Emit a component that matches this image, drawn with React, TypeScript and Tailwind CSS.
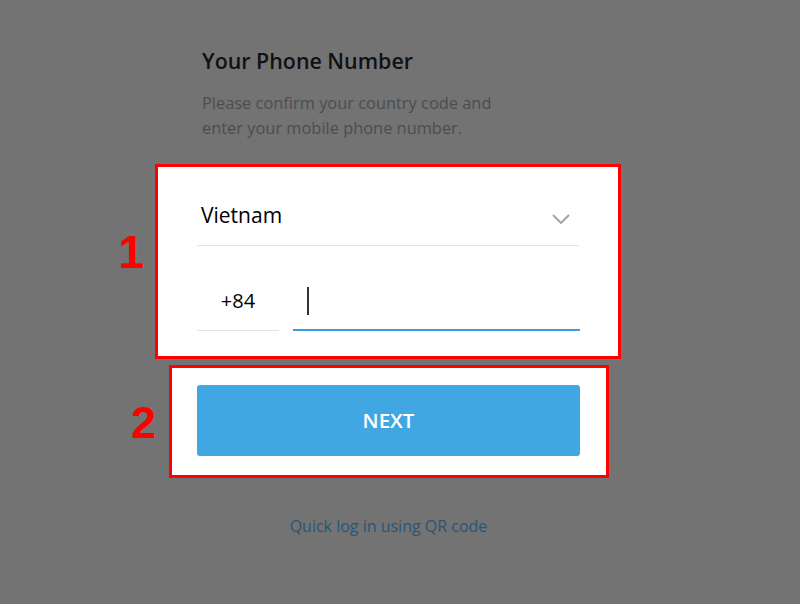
export default function App() {
  return (
    <div className="w-[800px] h-[604px] overflow-hidden bg-[#737373] font-['Open_Sans',sans-serif]">
      <div className="pl-[202px] pt-[46px]">
        <h1 className="text-[21.4px] leading-[30px] font-semibold text-[#111111]">Your Phone Number</h1>
        <p className="mt-[14px] text-[16.4px] leading-[25px] text-[#4d4d4d]">
          Please confirm your country code and
          <br />
          enter your mobile phone number.
        </p>
      </div>

      {/* step 1 */}
      <div className="mt-[24px] flex items-start">
        <div className="w-[155px] pr-[11px] text-right">
          <span className="mt-[65px] block font-['Liberation_Sans',Arial,sans-serif] text-[46px] leading-[46px] font-bold text-[#ff0000]">
            1
          </span>
        </div>
        <div className="box-border h-[195px] w-[466px] border-[3px] border-[#ff0000] bg-white pl-[39px]">
          <div className="w-[382px]">
            <div className="flex items-center justify-between border-b border-[#e4e4e4] pt-[34px] pb-[16px] pl-[4px]">
              <span className="text-[21px] leading-[28px] text-[#000000]">Vietnam</span>
              <svg width="18" height="10" viewBox="0 0 18 10" className="mr-[9px] mt-[8px]">
                <path d="M1 1l8 8 8-8" fill="none" stroke="#a0a0a0" strokeWidth="1.8" />
              </svg>
            </div>
          </div>
          <div className="mt-[41px] flex gap-[14px]">
            <div className="w-[82px] border-b border-[#e4e4e4] pb-[15px] text-center text-[20px] leading-[28px] text-[#000000]">
              +84
            </div>
            <div className="flex w-[287px] border-b-2 border-[#3a9de0] pb-[14px] pl-[14px]">
              <span className="block h-[28px] w-[2px] bg-[#333333]" />
            </div>
          </div>
        </div>
      </div>

      {/* step 2 */}
      <div className="mt-[6px] flex items-start">
        <div className="w-[169px] pr-[13px] text-right">
          <span className="mt-[35px] block font-['Liberation_Sans',Arial,sans-serif] text-[45px] leading-[45px] font-bold text-[#ff0000]">
            2
          </span>
        </div>
        <div className="box-border h-[113px] w-[440px] border-[3px] border-[#ff0000] bg-white pl-[25px] pt-[17px]">
          <button
            type="button"
            className="flex h-[71px] w-[383px] items-center justify-center rounded-[3px] bg-[#40a7e3] text-[20.5px] font-semibold text-white"
          >
            NEXT
          </button>
        </div>
      </div>

      <div className="ml-[197px] mt-[36px] w-[383px] text-center text-[16px] leading-[24px] text-[#275679]">
        Quick log in using QR code
      </div>
    </div>
  )
}
